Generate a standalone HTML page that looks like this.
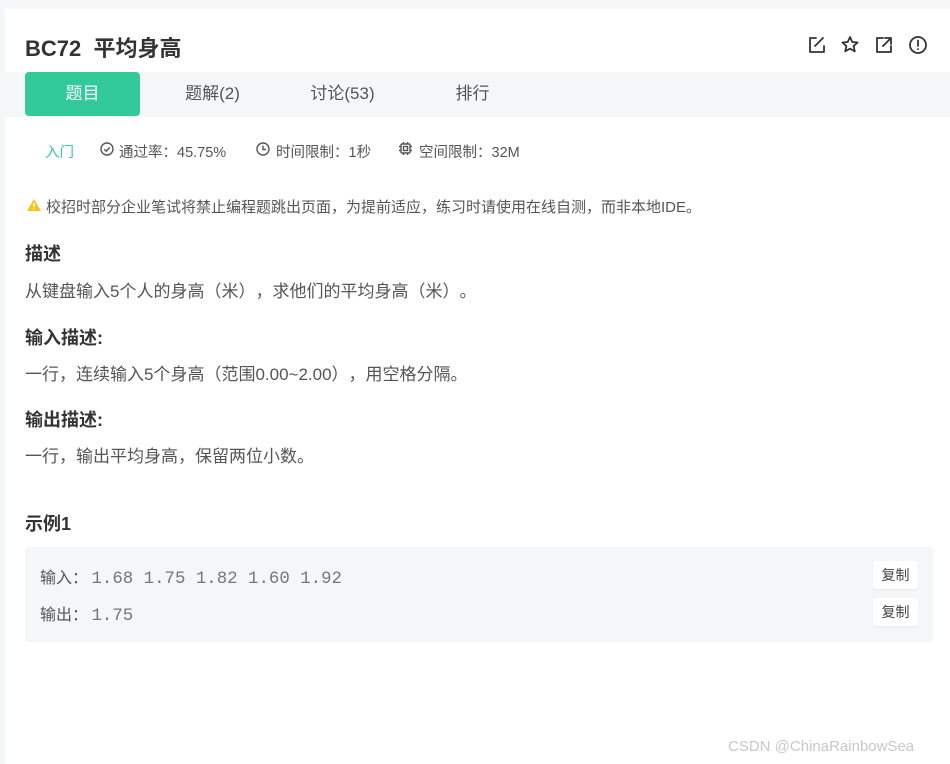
<!DOCTYPE html>
<html><head><meta charset="utf-8"><style>
*{margin:0;padding:0;box-sizing:border-box}
body{width:950px;height:764px;background:#fff;font-family:"Liberation Sans","Noto Sans CJK SC",sans-serif;color:#333;position:relative;overflow:hidden;text-spacing-trim:space-all;font-feature-settings:"halt" 0,"chws" 0}
.top{position:absolute;left:0;top:0;width:950px;height:9px;background:#f5f6f8}
.lb{position:absolute;left:0;top:0;width:5px;height:764px;background:#f5f6f8}
.a{position:absolute;white-space:nowrap}
.tabs{position:absolute;left:5px;top:72px;width:945px;height:45px;background:#f5f6f8}
.tab{position:absolute;top:72px;height:44px;line-height:44px;font-size:17px;color:#555;text-align:center}
.act{left:25px;width:115px;background:#32ca99;color:#fff;border-radius:4px}
.meta{font-size:14.5px;color:#555;top:141px}
h3{font-size:18px;font-weight:bold;color:#333}
.p{font-size:17px;color:#555}
.box{position:absolute;left:25px;top:547px;width:908px;height:95px;background:#f5f6f8;border-radius:4px}
.btn{position:absolute;left:873px;width:45px;height:28px;background:#fff;border-radius:3px;font-size:14px;color:#444;text-align:center;line-height:28px;box-shadow:0 1px 2px rgba(0,0,0,.06)}
.mono{font-family:"Liberation Mono",monospace;color:#777;font-size:17.4px}
</style></head><body>
<div class="top"></div><div class="lb"></div>
<div class="a" style="left:25px;top:31px;font-size:22px;font-weight:bold;color:#333">BC72&nbsp; 平均身高</div>
<svg class="a" style="left:807px;top:35px" width="122" height="20" viewBox="0 0 122 20" fill="none" stroke="#333" stroke-width="1.8" stroke-linejoin="round" stroke-linecap="round">
<path d="M9 3H3v14h14v-6M16 3l-8 8"/>
<path d="M43 2l2.3 5 5.3.5-4 3.6 1.2 5.3-4.8-2.8-4.8 2.8 1.2-5.3-4-3.6 5.3-.5z"/>
<path d="M76 3h-6v14h14v-6M78 3h6v6M84 3l-8 8"/>
<circle cx="111" cy="10" r="8"/><path d="M111 5.5v5.5M111 14v.3"/>
</svg>
<div class="tabs"></div>
<div class="tab act">题目</div>
<div class="tab" style="left:160px;width:105px">题解(2)</div>
<div class="tab" style="left:290px;width:105px">讨论(53)</div>
<div class="tab" style="left:420px;width:105px">排行</div>
<div class="a meta" style="left:45px;color:#32ca99">入门</div>
<svg class="a" style="left:100px;top:142px" width="14" height="14" viewBox="0 0 14 14" fill="none" stroke="#555" stroke-width="1.4"><circle cx="7" cy="7" r="6"/><path d="M4.2 7.2l2 2 3.6-3.8"/></svg>
<div class="a meta" style="left:119px">通过率：45.75%</div>
<svg class="a" style="left:256px;top:142px" width="14" height="14" viewBox="0 0 14 14" fill="none" stroke="#555" stroke-width="1.4"><circle cx="7" cy="7" r="6"/><path d="M7 3.5V7.5H10"/></svg>
<div class="a meta" style="left:276px">时间限制：1秒</div>
<svg class="a" style="left:398px;top:141px" width="15" height="15" viewBox="0 0 15 15" fill="none" stroke="#555" stroke-width="1.4"><rect x="3" y="3" width="9" height="9" rx="1"/><rect x="5.5" y="5.5" width="4" height="4"/><path d="M5.5 1v2M9.5 1v2M5.5 12v2M9.5 12v2M1 5.5h2M1 9.5h2M12 5.5h2M12 9.5h2"/></svg>
<div class="a meta" style="left:419px">空间限制：32M</div>
<svg class="a" style="left:26px;top:198px" width="16" height="14" viewBox="0 0 16 14"><path d="M8 1L15 13H1z" fill="#f5c518"/><path d="M8 5v4M8 10.5v1" stroke="#fff" stroke-width="1.6"/></svg>
<div class="a" style="left:46px;top:196px;font-size:15px;color:#555">校招时部分企业笔试将禁止编程题跳出页面，为提前适应，练习时请使用在线自测，而非本地IDE。</div>
<h3 class="a" style="left:25px;top:240px">描述</h3>
<div class="a p" style="left:25px;top:277px">从键盘输入5个人的身高（米），求他们的平均身高（米）。</div>
<h3 class="a" style="left:25px;top:324px">输入描述:</h3>
<div class="a p" style="left:25px;top:360px">一行，连续输入5个身高（范围0.00~2.00），用空格分隔。</div>
<h3 class="a" style="left:25px;top:406px">输出描述:</h3>
<div class="a p" style="left:25px;top:442px">一行，输出平均身高，保留两位小数。</div>
<h3 class="a" style="left:25px;top:510px">示例1</h3>
<div class="box"></div>
<div class="a" style="left:40px;top:564px;font-size:16px;color:#555">输入：<span class="mono">&thinsp;1.68 1.75 1.82 1.60 1.92</span></div>
<div class="a" style="left:40px;top:601px;font-size:16px;color:#555">输出：<span class="mono">&thinsp;1.75</span></div>
<div class="btn" style="top:561px">复制</div>
<div class="btn" style="top:598px">复制</div>
<div class="a" style="left:728px;top:738px;font-size:15px;color:#c8c8c8">CSDN @ChinaRainbowSea</div>
</body></html>
